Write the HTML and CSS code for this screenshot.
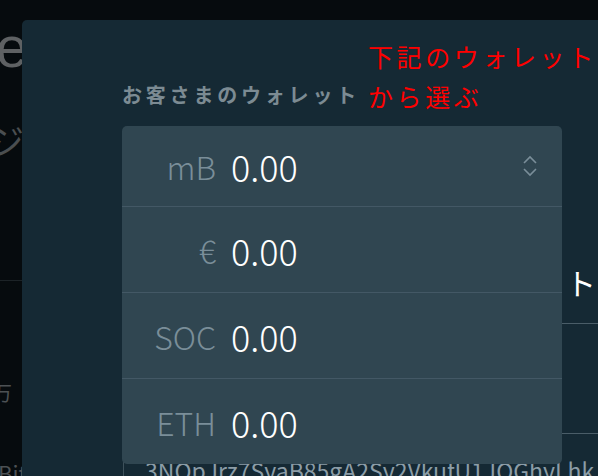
FILE: index.html
```html
<!DOCTYPE html>
<html lang="ja">
<head>
  <meta charset="UTF-8" />
  <meta name="viewport" content="width=device-width, initial-scale=1.0"/>
  <title>ウォレット選択</title>
  <link rel="stylesheet" href="styles.css">
</head>
<body>

  <div class="page">
    <div class="page-line page-title"><span>Exchange</span></div>
    <div class="page-line page-sub"><span>チャージ</span></div>
    <div class="page-rule"></div>
    <div class="page-line page-small"><span>万</span></div>
    <div class="page-line page-foot"><span>Bitcoin</span></div>
  </div>

  <div class="modal">
    <div class="note">下記のウォレット<br>から選ぶ</div>

    <div class="label">お客さまのウォレット</div>

    <div class="wallet-select">
      <div class="wallet-row current">
        <span class="unit">mB</span>
        <span class="amount">0.00</span>
        <svg class="chevrons" width="16" height="24" viewBox="0 0 16 24">
          <polyline points="2,9 8,3 14,9" fill="none" stroke="#7a8e99" stroke-width="1.6"/>
          <polyline points="2,15 8,21 14,15" fill="none" stroke="#7a8e99" stroke-width="1.6"/>
        </svg>
      </div>
      <div class="wallet-list">
        <div class="wallet-row">
          <span class="unit">€</span>
          <span class="amount">0.00</span>
        </div>
        <div class="wallet-row">
          <span class="unit">SOC</span>
          <span class="amount">0.00</span>
        </div>
        <div class="wallet-row">
          <span class="unit">ETH</span>
          <span class="amount">0.00</span>
        </div>
      </div>
    </div>

    <div class="dest-title">送金先ウォレット</div>
    <div class="dest-box"></div>
    <div class="address">3NQpJrz7SyaB85gA2Sy2VkufU1JQGhyLhk</div>
  </div>

</body>
</html>
```

FILE: styles.css
```css
* {
  box-sizing: border-box;
}
html, body {
  margin: 0;
  height: 100%;
  overflow: hidden;
}
body {
  background: #060b0e;
  font-family: 'Noto Sans CJK JP', 'Noto Sans', sans-serif;
  position: relative;
}

/* page behind the dialog */
.page {
  width: 22px;
  overflow: hidden;
  padding-top: 14px;
}
.page-line {
  display: flex;
  justify-content: flex-end;
  white-space: nowrap;
}
.page-title {
  font-family: 'Liberation Sans', sans-serif;
  font-size: 58px;
  line-height: 66px;
  color: #5e6163;
  margin-left: -300px;
  margin-right: -6px;
}
.page-sub {
  font-size: 36px;
  line-height: 44px;
  color: #4a4e50;
  margin-top: 38px;
  margin-left: -200px;
  margin-right: -2px;
}
.page-rule {
  border-top: 1px solid #1c2327;
  margin-top: 118px;
}
.page-small {
  font-size: 20px;
  line-height: 24px;
  color: #4c5154;
  margin-top: 100px;
  margin-left: -8px;
  justify-content: flex-start;
}
.page-foot {
  font-size: 22px;
  line-height: 26px;
  color: #4c5154;
  margin-top: 54px;
  justify-content: flex-start;
  margin-left: -2px;
}

/* dialog */
.modal {
  position: absolute;
  left: 22px;
  top: 20px;
  width: 640px;
  height: 520px;
  background: #152934;
  border-radius: 5px;
  padding: 63px 0 0 100px;
}
.note {
  position: absolute;
  left: 346px;
  top: 16px;
  color: #ff0000;
  font-size: 25px;
  line-height: 40px;
  letter-spacing: 3.6px;
}
.label {
  font-size: 20px;
  line-height: 24px;
  font-weight: bold;
  letter-spacing: 3.8px;
  color: #7c8b93;
}

.wallet-select {
  position: relative;
  width: 440px;
  margin-top: 19px;
  background: #304651;
  border-radius: 5px 5px 0 0;
}
.wallet-list {
  position: absolute;
  left: 0;
  top: 100%;
  width: 100%;
  background: #304651;
  border-radius: 0 0 5px 5px;
  z-index: 2;
}
.wallet-row {
  display: grid;
  grid-template-columns: 94px 1fr auto;
  column-gap: 15px;
  align-items: center;
  height: 86px;
  padding-right: 24px;
  border-top: 1px solid #435865;
}
.wallet-row.current {
  height: 80px;
  border-top: none;
}
.unit {
  text-align: right;
  font-size: 32px;
  font-weight: 300;
  color: #7a8e99;
}
.amount {
  font-size: 36px;
  font-weight: 300;
  color: #ffffff;
}
.chevrons {
  display: block;
}

/* content under the open list */
.dest-title {
  height: 117px;
  padding: 56px 0 0 206px;
  font-size: 30px;
  line-height: 40px;
  letter-spacing: 4px;
  color: #ffffff;
  white-space: nowrap;
}
.dest-box {
  height: 110px;
  margin-left: 1px;
  border-top: 1px solid #4a5d68;
}
.address {
  margin-left: 1px;
  border-top: 1px solid #4a5d68;
  border-left: 1px solid #3e515b;
  padding: 21px 0 0 21px;
  font-size: 23px;
  line-height: 30px;
  color: #8c9da7;
  white-space: nowrap;
}
```
